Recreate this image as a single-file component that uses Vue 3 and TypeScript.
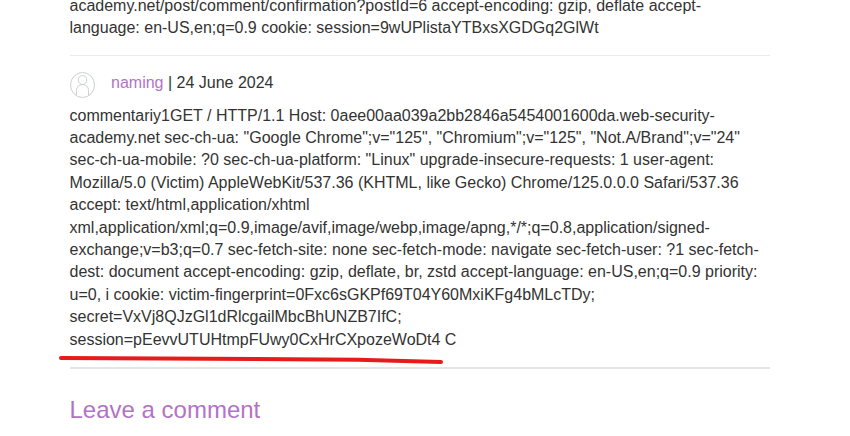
<script setup lang="ts">
interface Comment {
  author: string
  date: string
  lines: string[]
}

const previousLines: string[] = [
  'academy.net/post/comment/confirmation?postId=6 accept-encoding: gzip, deflate accept-',
  'language: en-US,en;q=0.9 cookie: session=9wUPlistaYTBxsXGDGq2GlWt',
]

const comment: Comment = {
  author: 'naming',
  date: '24 June 2024',
  lines: [
    'commentariy1GET / HTTP/1.1 Host: 0aee00aa039a2bb2846a5454001600da.web-security-',
    'academy.net sec-ch-ua: "Google Chrome";v="125", "Chromium";v="125", "Not.A/Brand";v="24"',
    'sec-ch-ua-mobile: ?0 sec-ch-ua-platform: "Linux" upgrade-insecure-requests: 1 user-agent:',
    'Mozilla/5.0 (Victim) AppleWebKit/537.36 (KHTML, like Gecko) Chrome/125.0.0.0 Safari/537.36',
    'accept: text/html,application/xhtml',
    'xml,application/xml;q=0.9,image/avif,image/webp,image/apng,*/*;q=0.8,application/signed-',
    'exchange;v=b3;q=0.7 sec-fetch-site: none sec-fetch-mode: navigate sec-fetch-user: ?1 sec-fetch-',
    'dest: document accept-encoding: gzip, deflate, br, zstd accept-language: en-US,en;q=0.9 priority:',
    'u=0, i cookie: victim-fingerprint=0Fxc6sGKPf69T04Y60MxiKFg4bMLcTDy;',
    'secret=VxVj8QJzGl1dRlcgailMbcBhUNZB7IfC;',
    'session=pEevvUTUHtmpFUwy0CxHrCXpozeWoDt4 C',
  ],
}
</script>

<template>
  <main class="page">
    <section class="comment previous">
      <p class="body">{{ previousLines.join('\n') }}</p>
    </section>
    <section class="comment current">
      <header class="meta">
        <svg class="avatar" viewBox="0 0 26 27" fill="none" stroke="#cdd1d1">
          <ellipse cx="12.5" cy="13" rx="12" ry="12.5" />
          <ellipse cx="12.5" cy="8" rx="4.2" ry="4.5" />
          <path d="M6.5 24V18.5C6.5 14.8 9 12.6 12.5 12.6S18.5 14.8 18.5 18.5V24" />
        </svg>
        <span><a class="author">{{ comment.author }}</a> | {{ comment.date }}</span>
      </header>
      <p class="body">{{ comment.lines.join('\n') }}</p>
      <svg class="marker" viewBox="0 0 390 14">
        <path d="M3 5.9 L230 7.2 L300 7.7 L383 9.9" />
      </svg>
    </section>
    <h2 class="title">Leave a comment</h2>
  </main>
</template>

<style>
body {
  background: #fff;
  overflow: hidden;
}
</style>

<style scoped>
.page {
  box-sizing: border-box;
  display: flex;
  flex-direction: column;
  width: 850px;
  height: 436px;
  padding: 0 80px 0 69.5px;
  overflow: hidden;
  color: #333332;
  font: 16px/22.4px "Liberation Sans", Arial, sans-serif;
}

.body {
  margin: 0;
  white-space: pre;
}

.previous {
  flex: none;
  display: flex;
  flex-direction: column;
  justify-content: flex-end;
  box-sizing: border-box;
  height: 56px;
  padding-bottom: 15.6px;
  border-bottom: 1px solid #ebebeb;
}

.current {
  flex: none;
  position: relative;
  box-sizing: border-box;
  height: 313px;
  border-bottom: 2px solid #e5e5e5;
}

.meta {
  display: flex;
  gap: 15.5px;
  height: 48.6px;
  box-sizing: border-box;
  padding-top: 15.5px;
}

.avatar {
  width: 26px;
  height: 27px;
}

.author {
  color: #b373c5;
}

.marker {
  position: absolute;
  left: -11.5px;
  top: 296px;
  width: 390px;
  height: 14px;
}

.marker path {
  fill: none;
  stroke: #e61b1c;
  stroke-width: 4;
  stroke-linecap: round;
  stroke-linejoin: round;
}

.title {
  margin: 24px 0 0;
  color: #b373c5;
  font-size: 24px;
  font-weight: 400;
  line-height: 34px;
}
</style>
